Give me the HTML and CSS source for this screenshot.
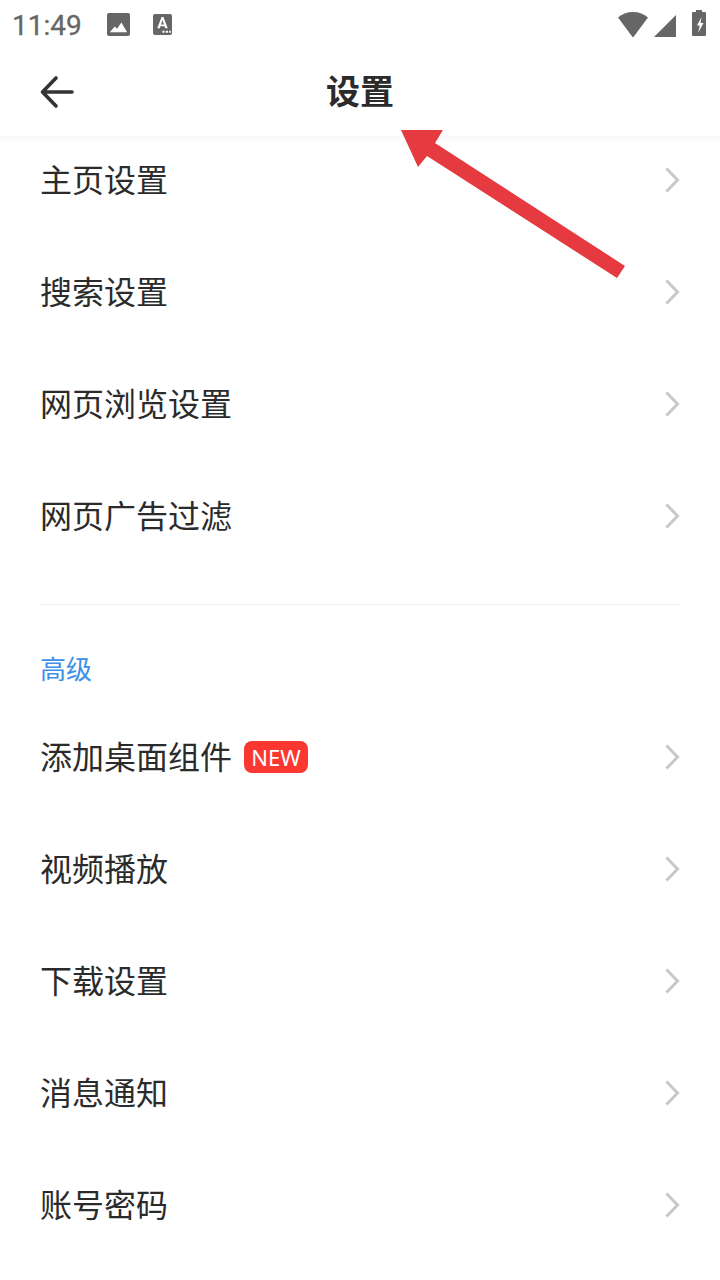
FILE: index.html
```html
<!DOCTYPE html>
<html lang="zh-CN">
<head>
<meta charset="utf-8">
<title>设置</title>
<link rel="stylesheet" href="styles.css">
</head>
<body>
<div class="page">
  <header class="top">
    <div class="status">
      <span class="time">11:49</span>
      <svg class="st-img" viewBox="0 0 24 24"><rect width="24" height="24" rx="2" fill="#666"/><path d="M3 20l5-6 2.5 2.5L15 10l6 10z" fill="#fff"/></svg>
      <svg class="st-a" viewBox="0 0 20 22"><rect width="20" height="22" rx="2" fill="#666"/><path d="M4.500 15L9 3h2l4.500 12h-2.600l-.7-2.200H7.800L7.100 15zM8.500 11h3L10 6.500z" fill="#fff"/><path d="M10 17.500h2.200v2.200H10zM13.500 17.500h2.200v2.200h-2.200zM17 17.500h1.800v2.200H17z" fill="#fff"/></svg>
      <span class="spacer"></span>
      <svg class="st-wifi" viewBox="0 0 32 25"><path d="M1 5.500C5 2 10 0 16 0s11 2 15 5.500L16.500 25h-1z" fill="#666"/></svg>
      <svg class="st-sig" viewBox="0 0 22 22"><path d="M22 0v22H0z" fill="#666"/></svg>
      <svg class="st-bat" viewBox="0 0 14 26"><path d="M4 0h6v2h3a1 1 0 0 1 1 1v22a1 1 0 0 1-1 1H1a1 1 0 0 1-1-1V3a1 1 0 0 1 1-1h3z" fill="#666"/><path d="M9.500 7L5 15.500h2.800L6 23 11.500 13H8.500z" fill="#fff"/></svg>
    </div>
    <div class="bar">
      <svg class="back" viewBox="0 0 36 36"><path d="M33 18H4M17 4L3.500 18 17 32" fill="none" stroke="#333" stroke-width="3.600" stroke-linecap="round" stroke-linejoin="round"/></svg>
      <h1 class="title">设置</h1>
    </div>
  </header>

  <main class="list">
    <div class="row"><span class="label">主页设置</span><svg class="chev" viewBox="0 0 16 28"><path d="M2.500 2.500L13.500 14 2.500 25.500" fill="none" stroke="#c8c8c8" stroke-width="3"/></svg></div>
    <div class="row"><span class="label">搜索设置</span><svg class="chev" viewBox="0 0 16 28"><path d="M2.500 2.500L13.500 14 2.500 25.500" fill="none" stroke="#c8c8c8" stroke-width="3"/></svg></div>
    <div class="row"><span class="label">网页浏览设置</span><svg class="chev" viewBox="0 0 16 28"><path d="M2.500 2.500L13.500 14 2.500 25.500" fill="none" stroke="#c8c8c8" stroke-width="3"/></svg></div>
    <div class="row"><span class="label">网页广告过滤</span><svg class="chev" viewBox="0 0 16 28"><path d="M2.500 2.500L13.500 14 2.500 25.500" fill="none" stroke="#c8c8c8" stroke-width="3"/></svg></div>
    <div class="divider"></div>
    <div class="section">高级</div>
    <div class="row"><span class="label">添加桌面组件</span><span class="badge">NEW</span><svg class="chev" viewBox="0 0 16 28"><path d="M2.500 2.500L13.500 14 2.500 25.500" fill="none" stroke="#c8c8c8" stroke-width="3"/></svg></div>
    <div class="row"><span class="label">视频播放</span><svg class="chev" viewBox="0 0 16 28"><path d="M2.500 2.500L13.500 14 2.500 25.500" fill="none" stroke="#c8c8c8" stroke-width="3"/></svg></div>
    <div class="row"><span class="label">下载设置</span><svg class="chev" viewBox="0 0 16 28"><path d="M2.500 2.500L13.500 14 2.500 25.500" fill="none" stroke="#c8c8c8" stroke-width="3"/></svg></div>
    <div class="row"><span class="label">消息通知</span><svg class="chev" viewBox="0 0 16 28"><path d="M2.500 2.500L13.500 14 2.500 25.500" fill="none" stroke="#c8c8c8" stroke-width="3"/></svg></div>
    <div class="row"><span class="label">账号密码</span><svg class="chev" viewBox="0 0 16 28"><path d="M2.500 2.500L13.500 14 2.500 25.500" fill="none" stroke="#c8c8c8" stroke-width="3"/></svg></div>
  </main>

  <svg class="annot" viewBox="0 0 720 1280"><path d="M401 130H443L435 143L625 266L617 278L427 156L418 167Z" fill="#e53a3f"/></svg>
</div>
</body>
</html>
```

FILE: styles.css
```css
* { box-sizing: border-box; }
html, body { margin: 0; padding: 0; background: #fff; }
.page {
  position: relative;
  width: 720px;
  height: 1280px;
  overflow: hidden;
  background: #fff;
  font-family: "Noto Sans CJK SC", "Noto Sans", sans-serif;
  color: #2b2b2b;
}
.top {
  height: 136px;
  box-shadow: 0 1px 8px rgba(0, 0, 0, 0.06);
  background: #fff;
  position: relative;
  z-index: 1;
}
.status {
  height: 48px;
  display: flex;
  align-items: center;
  padding: 0 13px;
}
.time { font: 28px/44px Roboto, sans-serif; color: #666; width: 71px; margin-left: -1px; padding-top: 4px; -webkit-text-stroke: 0.3px #666; }
.st-img { width: 23px; height: 23px; margin-left: 24px; }
.st-a { width: 19px; height: 21px; margin-left: 23px; }
.spacer { flex: 1; }
.st-wifi { width: 32px; height: 25px; }
.st-sig { width: 22px; height: 22px; margin-left: 5px; margin-top: 3px; }
.st-bat { width: 14px; height: 26px; margin-left: 16px; margin-right: 1px; margin-bottom: 2px; }
.bar {
  height: 88px;
  display: flex;
  align-items: center;
  justify-content: center;
  position: relative;
}
.back { position: absolute; left: 39px; top: 26px; width: 36px; height: 36px; }
.title { margin: 0 0 4px; font-size: 34px; font-weight: 700; line-height: 84px; color: #2b2b2b; }
.list { padding: 0 40px; margin-top: -12px; }
.row {
  height: 112px;
  display: flex;
  align-items: center;
}
.label { font-size: 32px; line-height: 44px; color: #2b2b2b; padding-bottom: 4px; }
.badge {
  margin-left: 12px;
  width: 64px;
  height: 32px;
  border-radius: 8px;
  background: #fb3731;
  color: #fff;
  font: 400 22px/32px "Noto Sans", sans-serif;
  text-align: center;
}
.chev { width: 16px; height: 28px; margin-left: auto; }
.divider { height: 1px; background: #eeeeee; margin-top: 32px; }
.section { margin-top: 45px; font-size: 26px; line-height: 36px; color: #3d8fe8; margin-bottom: 15px; }
.annot { position: absolute; left: 0; top: 0; width: 720px; height: 1280px; pointer-events: none; z-index: 2; }
```
